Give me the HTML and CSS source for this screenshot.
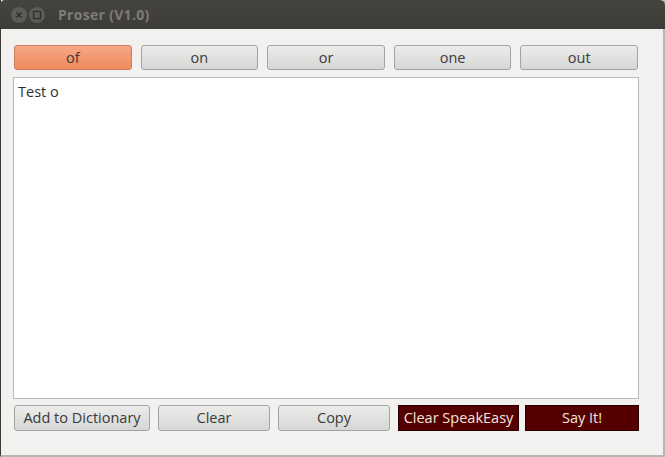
FILE: index.html
```html
<!DOCTYPE html>
<html>
<head>
<meta charset="utf-8">
<link rel="stylesheet" href="styles.css">
</head>
<body>
<div class="window">
  <div class="titlebar">
    <div class="wm-buttons">
      <span class="wm-btn"><svg width="16" height="16" viewBox="0 0 16 16"><path d="M5.5 5.5 L10.5 10.5 M10.5 5.5 L5.5 10.5" stroke="#2e2d2a" stroke-width="1.5" fill="none"/></svg></span>
      <span class="wm-btn"><svg width="16" height="16" viewBox="0 0 16 16"><rect x="4.5" y="4.5" width="7" height="7" stroke="#2e2d2a" stroke-width="1.3" fill="none"/></svg></span>
    </div>
    <div class="title">Proser (V1.0)</div>
  </div>
  <div class="content">
    <div class="suggestions">
      <button class="btn active">of</button>
      <button class="btn">on</button>
      <button class="btn">or</button>
      <button class="btn">one</button>
      <button class="btn">out</button>
    </div>
    <div class="editor">Test o</div>
    <div class="actions">
      <button class="btn w-dict">Add to Dictionary</button>
      <button class="btn w-clear">Clear</button>
      <button class="btn w-copy">Copy</button>
      <button class="btn dark w-speak">Clear SpeakEasy</button>
      <button class="btn dark w-say">Say It!</button>
    </div>
  </div>
</div>
</body>
</html>
```
FILE: styles.css
```css
* { box-sizing: border-box; }
html, body { margin: 0; padding: 0; background: #f2f1f0; }
body { font-family: "Open Sans", "DejaVu Sans", sans-serif; font-size: 14.5px; color: #3c3c3c; }
.window {
  width: 665px; height: 457px;
  background: #f2f1f0;
  border-left: 1px solid #3c3b37;
  border-right: 2px solid #b8b6b2;
  border-bottom: 2px solid #b8b6b2;
  display: flex; flex-direction: column;
}
.titlebar {
  height: 29px;
  margin-left: -1px; margin-right: -2px;
  background: linear-gradient(#45443f, #3c3b37);
  border-radius: 5px 5px 0 0;
  display: flex; align-items: center;
  padding-left: 11px;
}
.wm-buttons { display: flex; gap: 2px; }
.wm-btn {
  width: 16px; height: 16px; border-radius: 50%;
  background: #5c5b56;
  display: flex; align-items: center; justify-content: center;
}
.title {
  margin-left: 13px;
  font-weight: bold; font-size: 14px;
  color: #7d7c77;
  letter-spacing: 0.3px;
}
.content {
  flex: 1;
  padding: 16px 24px 0 12px;
  display: flex; flex-direction: column;
}
.suggestions {
  display: grid; grid-template-columns: repeat(5, 1fr);
  column-gap: 9px;
  padding: 0 1px;
  height: 25px;
}
.btn {
  font-family: inherit; font-size: 14.5px;
  color: #3a3a3a;
  border: 1px solid #a3a3a1;
  border-radius: 3px;
  background: linear-gradient(#ececeb, #d6d6d5);
  padding: 1px 0 0 0;
  height: 100%;
  line-height: 1;
}
.btn.active {
  background: linear-gradient(#f6a785, #ee8b5f);
  border-color: #c9805f;
}
.editor {
  margin-top: 7px;
  height: 322px;
  background: #fff;
  border: 1px solid #bcbab6;
  padding: 4px 4px;
  font-size: 14.5px;
  color: #2f2f2f;
}
.actions {
  margin-top: 6px;
  display: flex;
  padding-left: 1px;
  height: 26px;
}
.w-dict { width: 136px; }
.w-clear { width: 112px; margin-left: 8px; }
.w-copy { width: 112px; margin-left: 8px; }
.w-speak { width: 121px; margin-left: 8px; }
.w-say { width: 114px; margin-left: 6px; }
.btn.dark {
  background: #550000;
  border: 1px solid #2a0000;
  border-radius: 0;
  color: #f0e6dc;
}
```
